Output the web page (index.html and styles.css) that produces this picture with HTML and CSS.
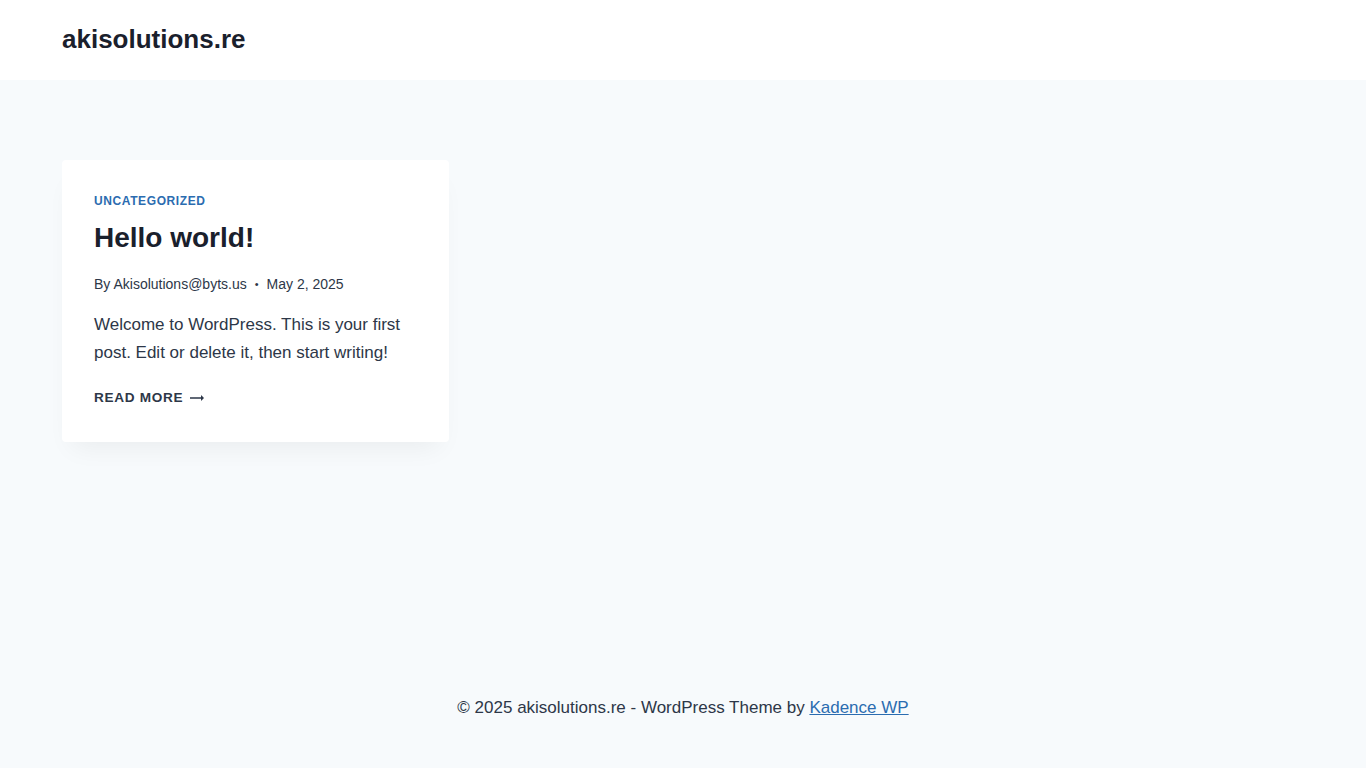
FILE: index.html
```html
<!DOCTYPE html>
<html lang="en">
<head>
<meta charset="utf-8">
<title>akisolutions.re</title>
<link rel="stylesheet" href="styles.css">
</head>
<body>
<header class="site-header">
  <div class="container header-inner">
    <a class="site-title" href="#">akisolutions.re</a>
  </div>
</header>
<main class="site-main">
  <div class="container">
    <div class="post-grid">
      <article class="loop-entry">
        <div class="entry-taxonomies"><a href="#">Uncategorized</a></div>
        <h2 class="entry-title">Hello world!</h2>
        <div class="entry-meta">
          <span>By Akisolutions@byts.us</span>
          <span class="sep">•</span>
          <span>May 2, 2025</span>
        </div>
        <div class="entry-summary">
          <p>Welcome to WordPress. This is your first post. Edit or delete it, then start writing!</p>
        </div>
        <div class="entry-footer">
          <a class="more-link" href="#">Read More
            <svg class="arrow" viewBox="0 0 16 8" width="14" height="8" aria-hidden="true"><path d="M0 3.2h12.6V0.6L16 4l-3.4 3.4V4.8H0z" fill="currentColor"/></svg>
          </a>
        </div>
      </article>
    </div>
  </div>
</main>
<footer class="site-footer">
  <div class="container footer-inner">
    <p>© 2025 akisolutions.re - WordPress Theme by <a href="#">Kadence WP</a></p>
  </div>
</footer>
</body>
</html>
```

FILE: styles.css
```css
* { box-sizing: border-box; }
html, body { margin: 0; padding: 0; }
body {
  background: #f7fafc;
  color: #2d3748;
  font-family: "Liberation Sans", Arial, sans-serif;
  font-size: 17px;
  line-height: 1.6;
}
a { color: #2b6cb0; }
.container {
  max-width: 1290px;
  margin: 0 auto;
  padding: 0 24px;
}
.site-header {
  background: #fff;
  height: 80px;
}
.header-inner {
  height: 80px;
  display: flex;
  align-items: center;
}
.site-title {
  font-size: 26px;
  font-weight: 700;
  line-height: 1.2;
  color: #1a202c;
  text-decoration: none;
}
.site-main {
  padding-top: 80px;
  min-height: 584px;
}
.post-grid {
  display: grid;
  grid-template-columns: repeat(3, 1fr);
  gap: 40px;
}
.loop-entry {
  background: #fff;
  border-radius: 4px;
  box-shadow: 0px 15px 25px -10px rgba(0,0,0,0.06);
  padding: 32px 32px 33px;
}
.entry-taxonomies {
  font-size: 12px;
  font-weight: 700;
  line-height: 18px;
  letter-spacing: 0.05em;
  text-transform: uppercase;
  margin-bottom: 7px;
}
.entry-taxonomies a { text-decoration: none; color: #2b6cb0; }
.entry-title {
  margin: 0;
  font-size: 28px;
  line-height: 1.5;
  font-weight: 700;
  color: #1a202c;
}
.entry-meta {
  font-size: 14px;
  line-height: 22px;
  margin: 14px 0 0;
  display: flex;
  gap: 8px;
  color: #2d3748;
}
.entry-meta .sep { font-size: 11px; }
.entry-summary { margin-top: 16px; }
.entry-summary p { margin: 0; line-height: 28px; }
.entry-footer { margin-top: 19px; line-height: 22px; }
.more-link {
  font-size: 13.6px;
  font-weight: 700;
  letter-spacing: 0.05em;
  text-transform: uppercase;
  text-decoration: none;
  color: #2d3748;
  display: inline-flex;
  align-items: center;
  gap: 7px;
}
.site-footer {
  padding: 30px 0 47px;
}
.footer-inner { text-align: center; }
.footer-inner p { margin: 0; line-height: 27px; }
.footer-inner a { color: #2b6cb0; text-decoration: underline; }
```
